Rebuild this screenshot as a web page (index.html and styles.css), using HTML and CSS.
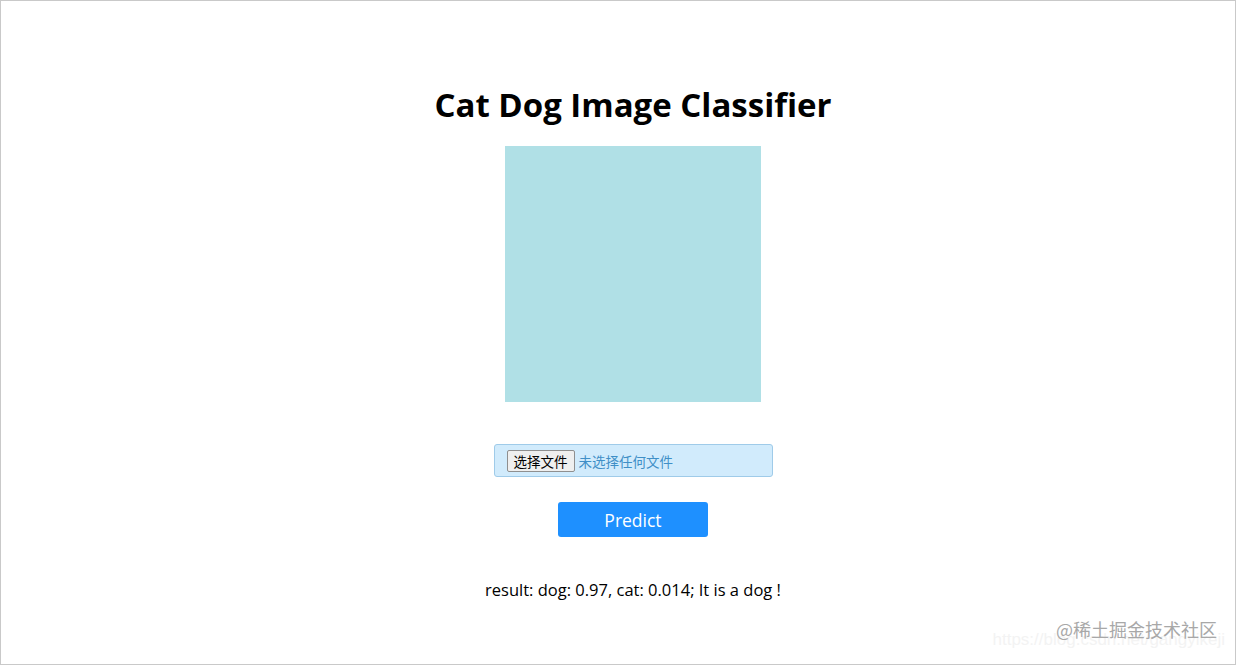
FILE: index.html
```html
<!doctype html>
<html lang="en">
<head>
<meta charset="UTF-8">
<title>Cat Dog Image Classifier</title>
<link rel="stylesheet" href="styles.css">
</head>
<body>
	<div class="frame">
		<h1 class="title">Cat Dog Image Classifier</h1>
		<!-- 预览区 -->
		<div class="preview"></div>
		<div class="upload">
			<label class="file_btn">选择文件</label>
			<span class="file_name">未选择任何文件</span>
		</div>
		<button class="predict">Predict</button>
		<p class="result">result: dog: 0.97, cat: 0.014; It is a dog !</p>
		<div class="mark">
			<span class="mark_url">https://blog.csdn.net/gangyikeji</span>
			<span class="mark_name">@稀土掘金技术社区</span>
		</div>
	</div>
</body>
</html>
```
FILE: styles.css
```css
html, body{
	margin:0; padding:0;
	background-color:#ffffff;
}
.frame{
	position:relative;
	box-sizing:border-box;
	width:1236px; height:665px;
	border:1px solid #c9c9c9;
	padding-left:30px;
	display:flex; flex-direction:column; align-items:center;
	font-family:"Open Sans", "Noto Sans CJK SC", sans-serif;
	color:#000000;
}
.title{
	margin:82px 0 0 0;
	font-size:33px; font-weight:bold;
	line-height:44px;
}
.preview{
	margin-top:19px;
	width:256px; height:256px;
	background-color:#b0e0e6;
}
.upload{
	margin-top:42px;
	box-sizing:border-box;
	width:279px; height:33px;
	border:1px solid #9fcbe9; border-radius:3px;
	background-color:#d1ebfc;
	display:flex; align-items:center;
	padding-left:12px;
	font-family:"Noto Sans CJK SC", sans-serif;
	font-size:13.5px;
}
.file_btn{
	border:1px solid #8f8f8f; border-radius:2px;
	background-color:#efefef;
	padding:0 6px; line-height:20px;
	color:#000000;
}
.file_name{
	margin-left:4px;
	color:#3f8fc7;
}
.predict{
	margin-top:25px;
	width:150px; height:35px;
	border:none; border-radius:3px;
	background-color:#1e90ff;
	color:#ffffff;
	font-family:"Open Sans", sans-serif;
	font-size:17.5px;
}
.result{
	margin:41px 0 0 0;
	font-size:16.5px;
}
.mark{
	position:absolute; right:18px; bottom:14px;
	width:180px; height:34px;
}
.mark_url{
	position:absolute; right:-8px; bottom:0;
	font-family:"Liberation Sans", sans-serif;
	font-size:17px; color:#f3f3f3;
	white-space:nowrap;
}
.mark_name{
	position:absolute; right:0; top:0;
	font-family:"Noto Sans CJK SC", sans-serif;
	font-size:18px; color:#a8a8a8;
	white-space:nowrap;
}
```
